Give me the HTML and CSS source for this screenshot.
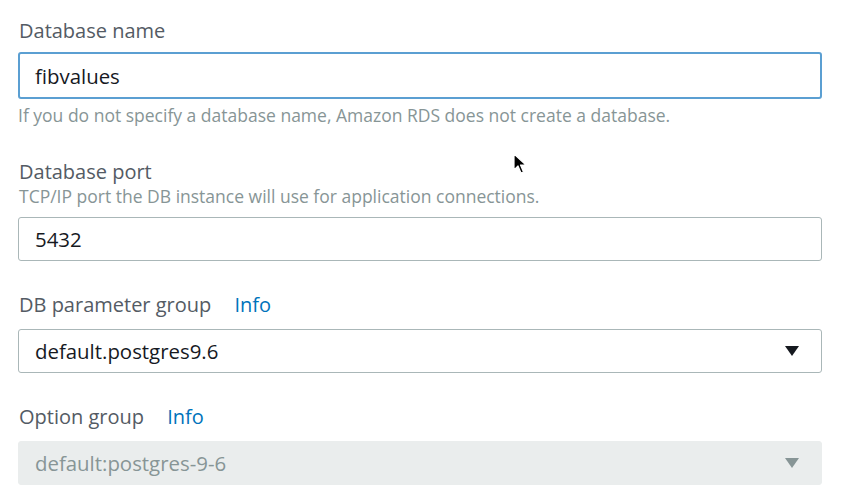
FILE: index.html
```html
<!DOCTYPE html>
<html>
<head>
<meta charset="utf-8">
<link rel="stylesheet" href="styles.css">
</head>
<body>
<div class="form">
  <div class="field">
    <div class="label">Database name</div>
    <div class="input focused">fibvalues</div>
    <div class="help">If you do not specify a database name, Amazon RDS does not create a database.</div>
  </div>
  <div class="field">
    <div class="label">Database port</div>
    <div class="desc">TCP/IP port the DB instance will use for application connections.</div>
    <div class="input">5432</div>
  </div>
  <div class="field">
    <div class="label">DB parameter group <span class="info">Info</span></div>
    <div class="input select">default.postgres9.6<span class="caret"></span></div>
  </div>
  <div class="field">
    <div class="label">Option group <span class="info">Info</span></div>
    <div class="input select disabled">default:postgres-9-6<span class="caret"></span></div>
  </div>
  <svg class="cursor" width="14" height="22" viewBox="0 0 14 22"><path d="M1 1 L1 17 L5 13 L8 20 L10.5 19 L7.5 12 L13 12 Z" fill="#000" stroke="#fff" stroke-width="1.2" stroke-linejoin="round"/></svg>
</div>
</body>
</html>
```
FILE: styles.css
```css
html, body {
  margin: 0;
  padding: 0;
  background: #ffffff;
}
.form {
  position: relative;
  padding: 18px 33px 0 18px;
  font-family: "Open Sans", "Noto Sans", sans-serif;
}
.field {
  display: flex;
  flex-direction: column;
  margin-bottom: 31px;
}
.field:first-child {
  margin-bottom: 33px;
}
.label {
  font-size: 20px;
  line-height: 26px;
  color: #545b64;
  padding-left: 1px;
}
.info {
  color: #0073bb;
  margin-left: 18px;
}
.desc {
  font-size: 17.5px;
  line-height: 22px;
  color: #879596;
  padding-left: 1px;
}
.help {
  font-size: 17.5px;
  line-height: 22px;
  color: #879596;
  margin-top: 5px;
}
.input {
  box-sizing: border-box;
  height: 44px;
  margin-top: 11px;
  border: 1px solid #aab7b8;
  border-radius: 3px;
  padding: 0 16px;
  font-size: 20.4px;
  color: #16191f;
  display: flex;
  align-items: center;
  justify-content: space-between;
}
.desc + .input {
  margin-top: 10px;
}
.input.focused {
  height: 47px;
  margin-top: 8px;
  border: 2px solid #5b9fd2;
  padding: 0 15px;
}
.select .caret {
  width: 0;
  height: 0;
  border-left: 7px solid transparent;
  border-right: 7px solid transparent;
  border-top: 10px solid #16191f;
  margin-right: 6px;
}
.disabled {
  background: #eaeded;
  border-color: #eaeded;
  color: #879596;
}
.disabled .caret {
  border-top-color: #879596;
}
.cursor {
  position: absolute;
  left: 513px;
  top: 153px;
}
```
